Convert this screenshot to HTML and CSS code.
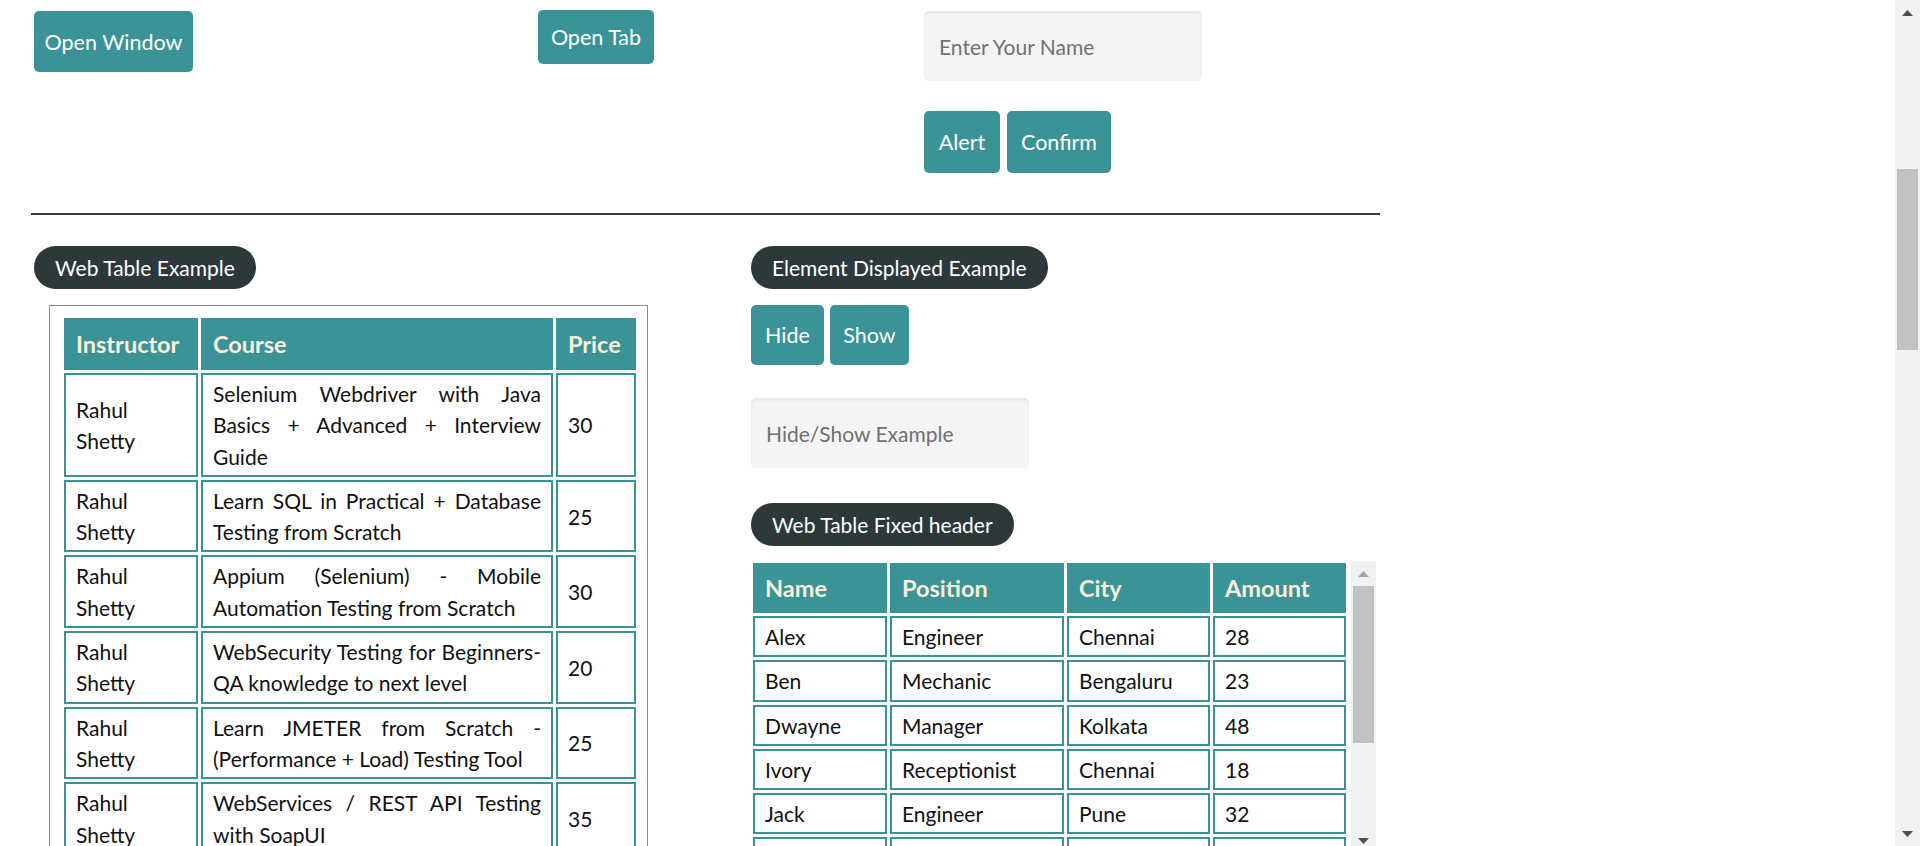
FILE: index.html
```html
<!DOCTYPE html>
<html lang="en">
<head>
<meta charset="utf-8">
<title>Practice Page</title>
<link rel="stylesheet" href="styles.css">
</head>
<body>
<div class="viewport">
  <main class="page">
    <section class="top-row">
      <div class="top-col">
        <button class="btn btn-window">Open Window</button>
      </div>
      <div class="top-col">
        <button class="btn btn-tab">Open Tab</button>
      </div>
      <div class="top-col alert-col">
        <input class="text-input" type="text" placeholder="Enter Your Name">
        <div class="btn-group gap7">
          <button class="btn btn-mid btn-alert">Alert</button>
          <button class="btn btn-mid btn-confirm">Confirm</button>
        </div>
      </div>
    </section>

    <hr class="divider">

    <section class="bottom-row">
      <div class="left-col">
        <div class="pill">Web Table Example</div>
        <div class="table-box">
          <table class="data-table courses">
            <colgroup>
              <col class="c-instr"><col class="c-course"><col class="c-price">
            </colgroup>
            <thead>
              <tr><th>Instructor</th><th>Course</th><th>Price</th></tr>
            </thead>
            <tbody>
              <tr><td>Rahul Shetty</td><td class="just">Selenium Webdriver with Java Basics + Advanced + Interview Guide</td><td>30</td></tr>
              <tr><td>Rahul Shetty</td><td class="just">Learn SQL in Practical + Database Testing from Scratch</td><td>25</td></tr>
              <tr><td>Rahul Shetty</td><td class="just">Appium (Selenium) - Mobile Automation Testing from Scratch</td><td>30</td></tr>
              <tr><td>Rahul Shetty</td><td class="just">WebSecurity Testing for Beginners-QA knowledge to next level</td><td>20</td></tr>
              <tr><td>Rahul Shetty</td><td class="just">Learn JMETER from Scratch - (Performance + Load) Testing Tool</td><td>25</td></tr>
              <tr><td>Rahul Shetty</td><td class="just">WebServices / REST API Testing with SoapUI</td><td>35</td></tr>
              <tr><td>Rahul Shetty</td><td class="just">QA Expert Course :Software Testing + Bugzilla + SQL + Agile</td><td>25</td></tr>
              <tr><td>Rahul Shetty</td><td class="just">Master Selenium Automation in simple Python Language</td><td>25</td></tr>
            </tbody>
          </table>
        </div>
      </div>

      <div class="right-col">
        <div class="pill">Element Displayed Example</div>
        <div class="btn-group">
          <button class="btn btn-hs btn-hide">Hide</button>
          <button class="btn btn-hs btn-show">Show</button>
        </div>
        <input class="text-input hs-input" type="text" placeholder="Hide/Show Example">
        <div class="pill pill-fixed">Web Table Fixed header</div>
        <div class="fixed-wrap">
          <table class="data-table people">
            <colgroup>
              <col class="c-name"><col class="c-pos"><col class="c-city"><col class="c-amt">
            </colgroup>
            <thead>
              <tr><th>Name</th><th>Position</th><th>City</th><th>Amount</th></tr>
            </thead>
            <tbody>
              <tr><td>Alex</td><td>Engineer</td><td>Chennai</td><td>28</td></tr>
              <tr><td>Ben</td><td>Mechanic</td><td>Bengaluru</td><td>23</td></tr>
              <tr><td>Dwayne</td><td>Manager</td><td>Kolkata</td><td>48</td></tr>
              <tr><td>Ivory</td><td>Receptionist</td><td>Chennai</td><td>18</td></tr>
              <tr><td>Jack</td><td>Engineer</td><td>Pune</td><td>32</td></tr>
              <tr><td>Joe</td><td>Postman</td><td>Chennai</td><td>46</td></tr>
            </tbody>
          </table>
          <div class="scrollbar inner-scroll">
            <div class="sb-btn"><svg width="11" height="6" viewBox="0 0 11 6"><path d="M0 6 L5.5 0 L11 6 Z" class="arrow-off"/></svg></div>
            <div class="sb-track"><div class="sb-thumb inner-thumb"></div></div>
            <div class="sb-btn"><svg width="11" height="6" viewBox="0 0 11 6"><path d="M0 0 L11 0 L5.5 6 Z" class="arrow-on"/></svg></div>
          </div>
        </div>
      </div>
    </section>
  </main>

  <div class="scrollbar page-scroll">
    <div class="sb-btn"><svg width="11" height="6" viewBox="0 0 11 6"><path d="M0 6 L5.5 0 L11 6 Z" class="arrow-on"/></svg></div>
    <div class="sb-track"><div class="sb-thumb page-thumb"></div></div>
    <div class="sb-btn"><svg width="11" height="6" viewBox="0 0 11 6"><path d="M0 0 L11 0 L5.5 6 Z" class="arrow-on"/></svg></div>
  </div>
</div>
</body>
</html>
```

FILE: styles.css
```css
html, body {
  margin: 0;
  padding: 0;
  height: 846px;
  overflow: hidden;
  background: #ffffff;
}

body {
  font-family: "Lato", "Liberation Sans", sans-serif;
  font-size: 21px;
  line-height: 1.5;
  color: #111111;
}

.viewport {
  display: flex;
  height: 846px;
}

.page {
  flex: 1;
  min-width: 0;
  overflow: hidden;
}

/* ---------- top row ---------- */
.top-row {
  display: grid;
  grid-template-columns: 504px 386px 300px;
  padding: 10px 0 0 34px;
  align-items: start;
}

.top-col {
  display: flex;
  flex-direction: column;
  align-items: flex-start;
}

.btn {
  padding: 0;
  font-family: inherit;
  font-size: 21.5px;
  line-height: 26px;
  text-align: center;
  color: #ffffff;
  background: #3a9397;
  border: none;
  border-radius: 5px;
  cursor: pointer;
}

.btn-window {
  margin-top: 1px;
  width: 159px;
  height: 61px;
}

.btn-tab {
  width: 116px;
  height: 54px;
}

.btn-mid {
  height: 62px;
}

.btn-alert { width: 76px; }
.btn-confirm { width: 104px; }

.btn-hs {
  height: 60px;
}

.btn-hide { width: 73px; }
.btn-show { width: 79px; }

.btn-group {
  display: flex;
  gap: 6px;
}

.btn-group.gap7 {
  gap: 7px;
}

.alert-col {
  padding-top: 1px;
  gap: 30px;
}

.text-input {
  box-sizing: border-box;
  width: 278px;
  height: 70px;
  padding: 0 15px;
  font-family: inherit;
  font-size: 21px;
  color: #333333;
  background: #f4f4f4;
  border: none;
  border-radius: 5px;
  box-shadow: inset 0 2px 3px rgba(0, 0, 0, 0.07);
  outline: none;
}

.text-input::placeholder {
  color: #717171;
}

/* ---------- divider ---------- */
.divider {
  margin: 40px 0 0 31px;
  width: 1349px;
  height: 0;
  border: none;
  border-top: 2px solid #3d3d3d;
}

/* ---------- bottom row ---------- */
.bottom-row {
  display: grid;
  grid-template-columns: 717px 640px;
  padding: 31px 0 0 34px;
  align-items: start;
}

.left-col,
.right-col {
  display: flex;
  flex-direction: column;
  align-items: flex-start;
}

.pill {
  padding: 7px 21px;
  font-size: 21px;
  line-height: 29px;
  color: #ffffff;
  background: #2c3839;
  border-radius: 22px;
}

.left-col .pill {
  margin-bottom: 16px;
}

.right-col .btn-group {
  margin-top: 16px;
}

.hs-input {
  margin-top: 33px;
}

.pill-fixed {
  margin-top: 35px;
}

.table-box {
  margin-left: 15px;
  padding: 9px 8px 0 11px;
  border: 1px solid #8a8a8a;
  border-bottom: none;
}

.data-table {
  border-collapse: separate;
  border-spacing: 3px;
  table-layout: fixed;
}

.data-table th,
.data-table td {
  box-sizing: border-box;
  text-align: left;
  vertical-align: middle;
}

.data-table th {
  padding: 9px 10px;
  font-size: 23.5px;
  line-height: 30px;
  font-weight: 700;
  color: #fbefd9;
  background: #3a9397;
  border: 2px solid #3a9397;
}

.data-table td {
  padding: 3px 10px;
  font-size: 21px;
  line-height: 31.3px;
  color: #111111;
  border: 2px solid #3a9397;
}

.just {
  text-align: justify !important;
}

.courses {
  width: 578px;
}

.c-instr { width: 134px; }
.c-course { width: 352px; }
.c-price { width: 80px; }

/* fixed header table */
.fixed-wrap {
  display: flex;
  align-items: flex-start;
  height: 292px;
  margin-top: 15px;
  margin-left: -1px;
}

.people {
  width: 599px;
  margin-top: -1px;
}

.people th {
  padding: 8px 10px;
}

.c-name { width: 134px; }
.c-pos { width: 174px; }
.c-city { width: 143px; }
.c-amt { width: 133px; }

/* ---------- fake scrollbars ---------- */
.scrollbar {
  display: flex;
  flex-direction: column;
  width: 25px;
  flex-shrink: 0;
  background: #f1f1f1;
}

.page-scroll {
  height: 846px;
}

.inner-scroll {
  height: 292px;
  margin-left: 2px;
}

.sb-btn {
  height: 25px;
  display: flex;
  align-items: center;
  justify-content: center;
  flex-shrink: 0;
}

.sb-track {
  flex: 1;
  padding: 0 2px;
}

.sb-thumb {
  background: #c1c1c1;
}

.page-thumb {
  margin-top: 144px;
  height: 181px;
}

.inner-thumb {
  height: 157px;
}

.arrow-on { fill: #505050; }
.arrow-off { fill: #a3a3a3; }
```
